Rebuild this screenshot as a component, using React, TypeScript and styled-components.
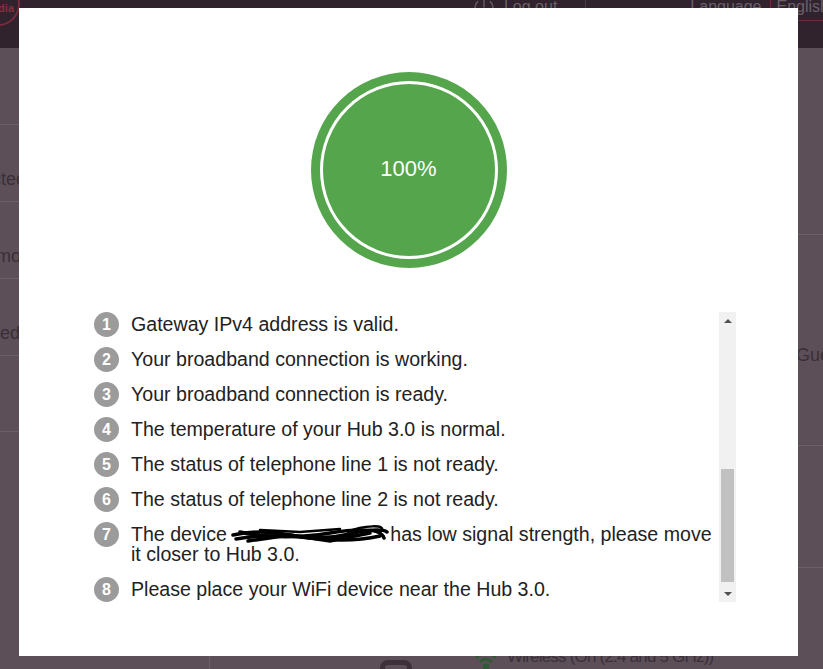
import React from "react";
import styled, { createGlobalStyle } from "styled-components";
import { Power } from "lucide-react";

const GlobalStyle = createGlobalStyle`
  html, body {
    margin: 0;
    padding: 0;
  }
  body {
    width: 823px;
    height: 669px;
    overflow: hidden;
    background: #5c4f58;
    font-family: "Liberation Sans", Arial, sans-serif;
  }
`;

const Scribble = () => (
  <svg viewBox="0 0 160 22" width="160" height="22">
    <g fill="none" stroke="#000" strokeLinecap="round" strokeWidth="3.5">
      <path d="M3 12 Q 30 6 60 12 T 120 11 T 157 9" />
      <path d="M6 16 Q 40 10 80 15 T 150 13" />
      <path d="M10 9 Q 50 18 100 10 T 154 15" />
      <path d="M18 18 L 60 12 L 100 18 L 140 10" />
      <path d="M118 9 C 132 2, 160 1, 150 9" strokeWidth="2.5" />
      <path d="M30 7 L 70 9 L 110 6" strokeWidth="2.5" />
    </g>
  </svg>
);

export default function App() {
  const checks: React.ReactNode[] = [
    "Gateway IPv4 address is valid.",
    "Your broadband connection is working.",
    "Your broadband connection is ready.",
    "The temperature of your Hub 3.0 is normal.",
    "The status of telephone line 1 is not ready.",
    "The status of telephone line 2 is not ready.",
    <>
      The device{" "}
      <Redaction>
        <Scribble />
      </Redaction>
      has low signal strength, please move it closer to Hub 3.0.
    </>,
    "Please place your WiFi device near the Hub 3.0.",
  ];

  return (
    <>
      <GlobalStyle />
      <Page>
        <Header>
          <Logo>media</Logo>
          <Nav>
            <NavLink>
              <Power size={24} strokeWidth={1.6} />
              Log out
            </NavLink>
            <NavDivider />
            <LanguageLabel>Language</LanguageLabel>
            <LanguageBox>English</LanguageBox>
          </Nav>
        </Header>

        <Main>
          <LeftCol>
            <LeftRow>Detected</LeftRow>
            <LeftRow>Dual mode</LeftRow>
            <LeftRow>Enabled</LeftRow>
            <LeftRow />
          </LeftCol>
          <CenterCol>
            <StatusRow>
              <LockShape />
              <WifiMark viewBox="0 0 22 20" width="22" height="20">
                <path d="M1 7 Q 11 -2 21 7" fill="none" stroke="currentColor" strokeWidth="2.6" />
                <path d="M5 11 Q 11 5 17 11" fill="none" stroke="currentColor" strokeWidth="2.6" />
                <circle cx="11" cy="16" r="3.2" fill="currentColor" />
              </WifiMark>
              <StatusText>Wireless (On (2.4 and 5 GHz))</StatusText>
            </StatusRow>
          </CenterCol>
          <RightCol>
            <RightRow $height={211} $pad={110}>Guest network</RightRow>
            <RightRow $height={122} $pad={40} />
            <RightRow $height={100} $pad={40} />
          </RightCol>
        </Main>

        <Overlay>
          <Modal>
            <Ring>
              <RingInner>100%</RingInner>
            </Ring>
            <ScrollArea>
              <CheckList>
                {checks.map((text, i) => (
                  <CheckItem key={i}>
                    <Badge>{i + 1}</Badge>
                    <CheckText>{text}</CheckText>
                  </CheckItem>
                ))}
              </CheckList>
              <ScrollTrack>
                <ArrowButton>
                  <ArrowUp />
                </ArrowButton>
                <Rail>
                  <Thumb />
                </Rail>
                <ArrowButton>
                  <ArrowDown />
                </ArrowButton>
              </ScrollTrack>
            </ScrollArea>
          </Modal>
        </Overlay>
      </Page>
    </>
  );
}

const Page = styled.div`
  position: relative;
  width: 823px;
  height: 669px;
  overflow: hidden;
  background: #5c4f58;
`;

const Header = styled.header`
  height: 48px;
  background: #30232e;
  display: flex;
  align-items: flex-start;
`;

const Logo = styled.div`
  width: 44px;
  height: 44px;
  flex: 0 0 44px;
  box-sizing: border-box;
  border: 2px solid #7a2a3a;
  border-radius: 50%;
  margin: -18px 0 0 -24px;
  padding: 18px 4px 0 0;
  display: flex;
  justify-content: flex-end;
  align-items: flex-start;
  color: #86303f;
  font-size: 11px;
  font-weight: bold;
  line-height: 12px;
  overflow: hidden;
`;

const Nav = styled.nav`
  margin: -8px -15px 0 auto;
  display: flex;
  align-items: flex-start;
  height: 29px;
  color: #6a6069;
  font-size: 16px;
  line-height: 29px;
  white-space: nowrap;
`;

const NavLink = styled.span`
  display: flex;
  align-items: center;
  gap: 8px;
  height: 29px;

  svg {
    color: #5f5660;
  }
`;

const NavDivider = styled.span`
  width: 1px;
  height: 56px;
  background: #4a3d48;
  margin: 0 104px 0 28px;
`;

const LanguageLabel = styled.span`
  margin-right: 8px;
`;

const LanguageBox = styled.span`
  box-sizing: border-box;
  height: 29px;
  border: 1px solid #66303f;
  padding: 0 8px 0 6px;
  line-height: 27px;
`;

const Main = styled.main`
  display: flex;
  height: 621px;
  margin-left: -46px;
  color: #3a2f37;
  font-size: 18px;
`;

const LeftCol = styled.div`
  width: 256px;
  flex: 0 0 256px;
  box-sizing: border-box;
  padding-top: 76px;
  border-right: 1px solid #6b5f68;
`;

const LeftRow = styled.div`
  height: 77px;
  box-sizing: border-box;
  border-top: 1px solid #6b5f68;
  padding-top: 44px;
  line-height: 20px;
  white-space: nowrap;

  &:last-child {
    border-bottom: 1px solid #6b5f68;
  }
`;

const CenterCol = styled.div`
  width: 585px;
  flex: 0 0 585px;
  display: flex;
  flex-direction: column;
  justify-content: flex-end;
`;

const StatusRow = styled.div`
  height: 24px;
  display: flex;
  align-items: flex-start;
  padding-left: 170px;
`;

const LockShape = styled.div`
  width: 32px;
  height: 30px;
  flex: 0 0 32px;
  box-sizing: border-box;
  margin-top: 15px;
  border: 5px solid #3c313a;
  border-radius: 8px;
`;

const WifiMark = styled.svg`
  flex: 0 0 22px;
  margin: 6px 0 0 63px;
  color: #2e5a36;
`;

const StatusText = styled.span`
  margin-left: 10px;
  font-size: 17px;
  letter-spacing: -0.8px;
  line-height: 24px;
  white-space: nowrap;
  color: #3b3039;
`;

const RightCol = styled.div`
  flex: 1;
  padding-top: 186px;
  white-space: nowrap;
`;

const RightRow = styled.div<{ $height: number; $pad: number }>`
  height: ${(p) => p.$height}px;
  box-sizing: border-box;
  border-top: 1px solid #6b5f68;
  padding: ${(p) => p.$pad}px 0 0 1px;
  line-height: 20px;
`;

const Overlay = styled.div`
  position: absolute;
  inset: 0;
  display: flex;
  align-items: flex-start;
  padding: 8px 0 0 19px;
`;

const Modal = styled.div`
  width: 779px;
  height: 648px;
  box-sizing: border-box;
  background: #fff;
  padding: 64px 0 54px;
  display: flex;
  flex-direction: column;
`;

const Ring = styled.div`
  align-self: center;
  width: 196px;
  height: 196px;
  flex: 0 0 196px;
  box-sizing: border-box;
  padding: 9px;
  border-radius: 50%;
  background: #54a54c;
`;

const RingInner = styled.div`
  width: 100%;
  height: 100%;
  box-sizing: border-box;
  border: 3px solid #fff;
  border-radius: 50%;
  display: flex;
  align-items: center;
  justify-content: center;
  color: #fff;
  font-size: 22px;
  padding-bottom: 2px;
`;

const ScrollArea = styled.div`
  display: flex;
  height: 290px;
  flex: 0 0 290px;
  margin: 44px 62px 0 75px;
`;

const CheckList = styled.ol`
  flex: 1;
  margin: 0;
  padding: 0;
  list-style: none;
  overflow: hidden;
`;

const CheckItem = styled.li`
  display: flex;
  align-items: flex-start;
  gap: 12px;
  margin-bottom: 10px;
`;

const Badge = styled.span`
  flex: 0 0 25px;
  height: 25px;
  border-radius: 50%;
  background: #9b9b9b;
  color: #fff;
  font-size: 16px;
  font-weight: bold;
  display: flex;
  align-items: center;
  justify-content: center;
`;

const CheckText = styled.span`
  flex: 1;
  font-size: 19.6px;
  line-height: 20px;
  padding: 2px 0 3px;
  color: #222;
`;

const Redaction = styled.span`
  display: inline-block;
  position: relative;
  width: 158px;
  height: 1px;

  svg {
    position: absolute;
    left: -2px;
    bottom: -4px;
  }
`;

const ScrollTrack = styled.div`
  width: 17px;
  flex: 0 0 17px;
  background: #f1f1f1;
  display: flex;
  flex-direction: column;
`;

const ArrowButton = styled.div`
  height: 17px;
  display: flex;
  align-items: center;
  justify-content: center;
`;

const ArrowUp = styled.span`
  width: 0;
  height: 0;
  border-left: 4px solid transparent;
  border-right: 4px solid transparent;
  border-bottom: 4px solid #505050;
`;

const ArrowDown = styled(ArrowUp)`
  border-bottom: none;
  border-top: 4px solid #505050;
`;

const Rail = styled.div`
  flex: 1;
  padding: 140px 2px 3px;
`;

const Thumb = styled.div`
  height: 113px;
  background: #c1c1c1;
`;
